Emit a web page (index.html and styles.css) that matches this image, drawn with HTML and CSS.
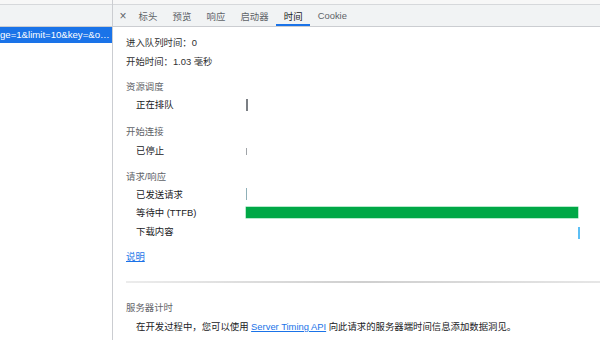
FILE: index.html
```html
<!DOCTYPE html>
<html lang="zh-CN">
<head>
<meta charset="utf-8">
<title>时间</title>
<link rel="stylesheet" href="styles.css">
</head>
<body>
<div class="app">
  <div class="left">
    <div class="strip"></div>
    <div class="left-head"></div>
    <div class="req selected">ge=1&amp;limit=10&amp;key=&amp;o…</div>
  </div>
  <div class="right">
    <div class="strip"></div>
    <div class="tabs">
      <span class="close">×</span>
      <span class="tab">标头</span>
      <span class="tab">预览</span>
      <span class="tab">响应</span>
      <span class="tab">启动器</span>
      <span class="tab active">时间</span>
      <span class="tab">Cookie</span>
    </div>
    <div class="content">
      <div class="line">进入队列时间：0</div>
      <div class="line l2">开始时间：1.03 毫秒</div>

      <div class="heading h1">资源调度</div>
      <div class="row">
        <span class="label">正在排队</span>
        <span class="track"><span class="bar queue" style="left:0;width:2px"></span></span>
      </div>

      <div class="heading h2">开始连接</div>
      <div class="row r1">
        <span class="label">已停止</span>
        <span class="track"><span class="bar stalled" style="left:0;width:1px"></span></span>
      </div>

      <div class="heading h3">请求/响应</div>
      <div class="row">
        <span class="label">已发送请求</span>
        <span class="track"><span class="bar sent" style="left:0;width:1px"></span></span>
      </div>
      <div class="row">
        <span class="label">等待中 (TTFB)</span>
        <span class="track"><span class="bar wait" style="left:0;width:332px"></span></span>
      </div>
      <div class="row r1">
        <span class="label">下载内容</span>
        <span class="track"><span class="bar download" style="left:332px;width:2px"></span></span>
      </div>

      <div class="line explain"><a class="link" href="#">说明</a></div>
      <div class="sep"></div>
      <div class="heading st">服务器计时</div>
      <div class="line sub">在开发过程中，您可以使用 <a class="link" href="#">Server Timing API</a> 向此请求的服务器端时间信息添加数据洞见。</div>
    </div>
  </div>
</div>
</body>
</html>
```
FILE: styles.css
```css
* { box-sizing: border-box; }
html, body { margin: 0; padding: 0; }
body {
  width: 600px;
  height: 340px;
  overflow: hidden;
  background: #fff;
  font-family: "Liberation Sans", "Noto Sans CJK SC", sans-serif;
  font-size: 9.4px;
  color: #303030;
}
.app { display: flex; height: 340px; }
.left {
  width: 113px;
  flex: none;
  border-right: 1px solid #cbcdd1;
  display: flex;
  flex-direction: column;
}
.strip {
  height: 5px;
  flex: none;
  background: #f7f7f7;
  border-bottom: 1px solid #d6d8db;
}
.left-head {
  height: 22px;
  background: #f1f3f4;
  border-bottom: 1px solid #cbcdd1;
}
.req {
  height: 16px;
  line-height: 16px;
  white-space: nowrap;
  overflow: hidden;
  font-size: 9.6px;
}
.req.selected { background: #1a73e8; color: #fff; }
.right { flex: 1; display: flex; flex-direction: column; min-width: 0; }
.tabs {
  height: 22px;
  flex: none;
  background: #f1f3f4;
  border-bottom: 1px solid #cbcdd1;
  display: flex;
  align-items: stretch;
  color: #5f6368;
}
.close {
  width: 10px;
  margin-left: 5px;
  margin-right: 3px;
  padding-top: 1px;
  display: flex;
  align-items: center;
  justify-content: center;
  font-size: 12px;
  color: #5f6368;
}
.tab {
  padding: 2px 7.6px 0;
  display: flex;
  align-items: center;
  border-bottom: 2px solid transparent;
}
.tab:first-of-type { padding-left: 9px; }
.tab.active { border-bottom-color: #1a73e8; color: #202124; }
.content { padding: 7px 0 0 13px; }
.line, .heading, .row { height: 18px; line-height: 18px; white-space: nowrap; }
.l2 { margin-top: 1px; }
.heading { color: #5f6368; }
.h1 { margin-top: 7px; }
.h2 { margin-top: 9px; }
.h3 { margin-top: 8px; }
.row { display: flex; align-items: center; }
.r1 { margin-top: 1px; }
.label { width: 120px; flex: none; padding-left: 10px; color: #202124; }
.track { position: relative; width: 334px; height: 18px; }
.bar { position: absolute; top: 50%; }
.queue { height: 12px; margin-top: -6px; background: #7b7f84; }
.stalled { height: 7px; margin-top: -3px; background: #a0a4a8; }
.sent { height: 12px; margin-top: -7px; background: #8fb0b8; }
.wait { height: 11px; margin-top: -6px; background: #00a846; box-shadow: 0 0 0 0.5px #6fd69a; }
.download { height: 12px; margin-top: -5px; background: #5cbff5; }
.explain { margin-top: 7px; }
.link { color: #1a73e8; text-decoration: underline; }
.sep {
  margin-top: 15px;
  height: 2px;
  background: linear-gradient(to right, #ececec, #cfcfcf 50%, #e6e6e6);
}
.st { margin-top: 16px; }
.sub { margin-top: 1px; padding-left: 10px; color: #202124; }
```
